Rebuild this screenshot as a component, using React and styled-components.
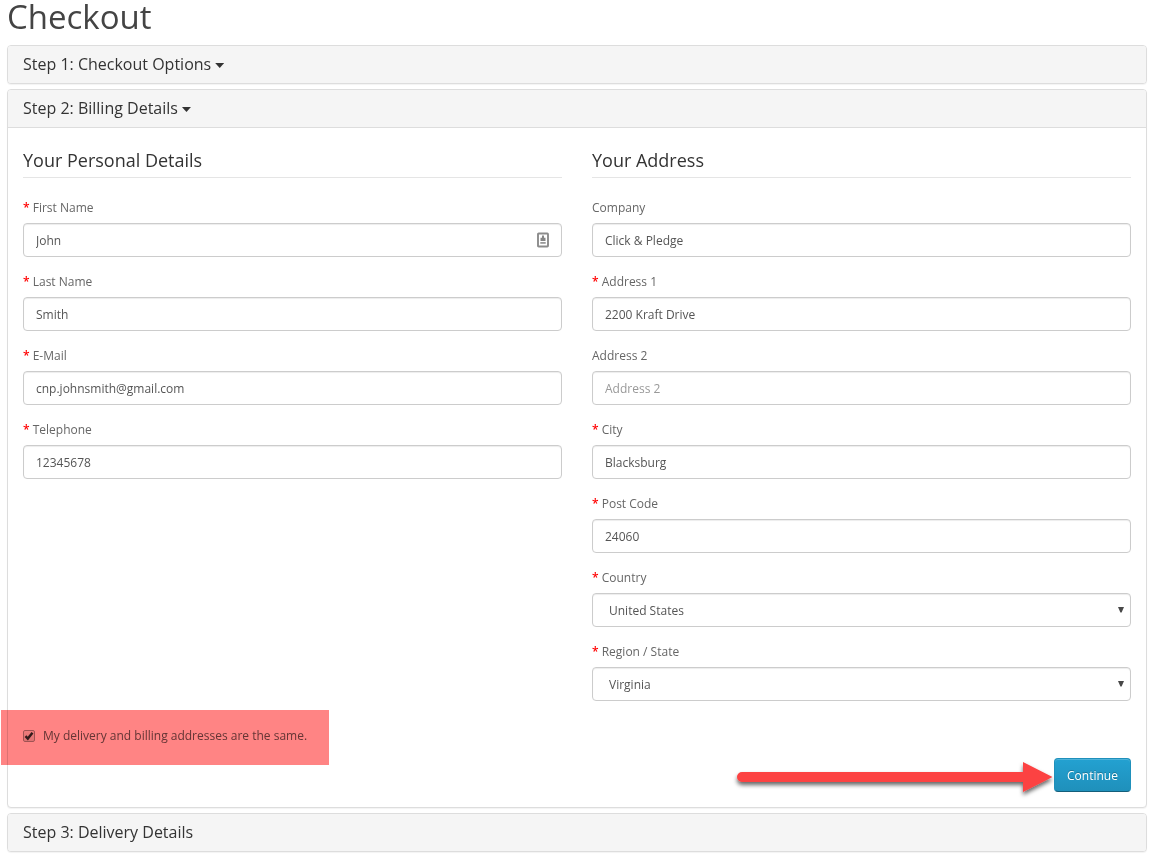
import React from "react";
import styled, { createGlobalStyle } from "styled-components";

const GlobalStyle = createGlobalStyle`
  *, *::before, *::after { box-sizing: border-box; }
  body {
    margin: 0;
    background: #fff;
    color: #666;
    font: 400 12px/20px "Open Sans", sans-serif;
  }
`;

const Page = styled.main`
  position: relative;
  width: 1152px;
  height: 857px;
  padding: 0 5px 0 7px;
`;

const PageTitle = styled.h1`
  margin: 0 0 12px;
  height: 33px;
  color: #444;
  font-size: 33px;
  font-weight: 400;
  line-height: 33px;
`;

const PanelGroup = styled.div`
  display: flex;
  flex-direction: column;
  gap: 5px;
`;

const Panel = styled.section`
  border: 1px solid #ddd;
  border-radius: 4px;
  background: #fff;
  box-shadow: 0 1px 1px rgba(0, 0, 0, 0.05);
`;

const PanelHeading = styled.header`
  display: flex;
  align-items: center;
  height: ${(p) => (p.$open ? 38 : 37)}px;
  padding: 0 15px 1px;
  background: #f5f5f5;
  border-radius: 3px;
  ${(p) => p.$open && "border-bottom: 1px solid #ddd; border-radius: 3px 3px 0 0;"}
`;

const PanelTitle = styled.h4`
  margin: 0;
  color: #333;
  font-size: 16px;
  font-weight: 400;
  line-height: 18px;
`;

const Caret = styled.span`
  width: 9px;
  height: 5px;
  margin: 3px 0 0 4px;
  background: #333;
  clip-path: polygon(0 0, 100% 0, 50% 100%);
`;

const PanelBody = styled.div`
  padding: 15px;
`;

const Columns = styled.div`
  display: grid;
  grid-template-columns: 1fr 1fr;
  gap: 30px;
`;

const Fieldset = styled.div`
  min-width: 0;
`;

const Legend = styled.h2`
  margin: 0 0 20px;
  height: 35px;
  color: #333;
  border-bottom: 1px solid #e5e5e5;
  font-size: 18px;
  font-weight: 400;
  line-height: 34px;
`;

const FormGroup = styled.div`
  height: 59px;
  margin-bottom: 15px;
`;

const Label = styled.label`
  display: block;
  margin-bottom: 5px;
  height: 20px;
`;

const Required = styled.span`
  color: #f00;
  font-weight: 600;
`;

const ControlFrame = styled.div`
  display: flex;
  align-items: center;
  height: 34px;
  padding: 0 ${(p) => (p.$select ? "6px 0 16px" : "12px")};
  border: 1px solid #ccc;
  border-radius: 4px;
  background: #fff;
  box-shadow: inset 0 1px 1px rgba(0, 0, 0, 0.075);
`;

const TextInput = styled.input`
  flex: 1;
  min-width: 0;
  height: 20px;
  margin: 2px 0 0;
  padding: 0;
  border: 0;
  outline: 0;
  background: transparent;
  color: #555;
  font: inherit;
  &::placeholder { color: #999; opacity: 1; }
`;

const SelectInput = styled.select`
  flex: 1;
  height: 22px;
  padding: 2px 0 0;
  border: 0;
  outline: 0;
  appearance: none;
  background: transparent;
  color: #555;
  font: inherit;
`;

const ActionArea = styled.div`
  display: flex;
  justify-content: space-between;
  height: 76px;
`;

const CheckLabel = styled.label`
  display: flex;
  align-items: center;
  gap: 8px;
  height: 20px;
  margin-top: 10px;
`;

const CheckBox = styled.span`
  display: flex;
  align-items: center;
  justify-content: center;
  width: 12px;
  height: 12px;
  border: 1px solid #a0a0a0;
  border-radius: 2px;
  background: linear-gradient(#eee, #dedede);
`;

const ContinueButton = styled.button`
  align-self: flex-end;
  width: 77px;
  height: 34px;
  padding: 2px 0 0;
  border: 1px solid;
  border-color: #1f90bb #1f90bb #145e7a;
  border-radius: 4px;
  background: linear-gradient(#23a1d1, #1f90bb);
  color: #fff;
  font: inherit;
  text-shadow: 0 -1px 0 rgba(0, 0, 0, 0.25);
  box-shadow: inset 0 1px 0 rgba(255, 255, 255, 0.2);
`;

const Highlight = styled.div`
  position: absolute;
  left: 1px;
  top: 710px;
  width: 328px;
  height: 55px;
  background: #ff8484;
  mix-blend-mode: multiply;
  pointer-events: none;
`;

const Arrow = styled.svg`
  position: absolute;
  left: 730px;
  top: 755px;
  pointer-events: none;
`;

const personal = [
  { label: "First Name", value: "John", required: true, contact: true },
  { label: "Last Name", value: "Smith", required: true },
  { label: "E-Mail", value: "cnp.johnsmith@gmail.com", required: true },
  { label: "Telephone", value: "12345678", required: true },
];

const address = [
  { label: "Company", value: "Click & Pledge" },
  { label: "Address 1", value: "2200 Kraft Drive", required: true },
  { label: "Address 2", value: "", placeholder: "Address 2" },
  { label: "City", value: "Blacksburg", required: true },
  { label: "Post Code", value: "24060", required: true },
  { label: "Country", value: "United States", required: true, select: true },
  { label: "Region / State", value: "Virginia", required: true, select: true },
];

function ContactIcon() {
  return (
    <svg width="12" height="16" viewBox="0 0 12 16" aria-hidden="true">
      <rect x="1" y="1.5" width="10" height="13" rx="0.7" fill="#fff" stroke="#8c8c8c" strokeWidth="1.9" />
      <path d="M5 3.5h2v2.2h1.5V9h-5V5.7H5Z" fill="#858585" />
      <path d="M3.3 10.9h5.4" stroke="#999" strokeWidth="1.8" />
    </svg>
  );
}

function Field({ label, value, required, placeholder, contact, select }) {
  const id = label.toLowerCase().replace(/[^a-z0-9]+/g, "-");
  return (
    <FormGroup>
      <Label htmlFor={id}>
        {required && <Required>* </Required>}
        {label}
      </Label>
      <ControlFrame $select={select}>
        {select ? (
          <>
            <SelectInput id={id} defaultValue={value}>
              <option>{value}</option>
            </SelectInput>
            <svg width="6" height="6" viewBox="0 0 6 6" aria-hidden="true">
              <path d="M0 0h6L3.6 5.6H2.4Z" fill="#484848" />
            </svg>
          </>
        ) : (
          <TextInput id={id} defaultValue={value} placeholder={placeholder} />
        )}
        {contact && <ContactIcon />}
      </ControlFrame>
    </FormGroup>
  );
}

export default function App() {
  return (
    <>
      <GlobalStyle />
      <Page>
        <PageTitle>Checkout</PageTitle>
        <PanelGroup>
          <Panel>
            <PanelHeading>
              <PanelTitle>Step 1: Checkout Options</PanelTitle>
              <Caret />
            </PanelHeading>
          </Panel>
          <Panel>
            <PanelHeading $open>
              <PanelTitle>Step 2: Billing Details</PanelTitle>
              <Caret />
            </PanelHeading>
            <PanelBody>
              <Columns>
                <Fieldset>
                  <Legend>Your Personal Details</Legend>
                  {personal.map((f) => <Field key={f.label} {...f} />)}
                </Fieldset>
                <Fieldset>
                  <Legend>Your Address</Legend>
                  {address.map((f) => <Field key={f.label} {...f} />)}
                </Fieldset>
              </Columns>
              <ActionArea>
                <CheckLabel>
                  <CheckBox role="checkbox" aria-checked="true">
                    <svg width="10" height="10" viewBox="0 0 10 10" aria-hidden="true">
                      <path d="M1.5 5.2 3.8 7.6 8.5 1.8" fill="none" stroke="#333" strokeWidth="2.4" />
                    </svg>
                  </CheckBox>
                  My delivery and billing addresses are the same.
                </CheckLabel>
                <ContinueButton>Continue</ContinueButton>
              </ActionArea>
            </PanelBody>
          </Panel>
          <Panel>
            <PanelHeading>
              <PanelTitle>Step 3: Delivery Details</PanelTitle>
            </PanelHeading>
          </Panel>
        </PanelGroup>
        <Highlight />
        <Arrow width="330" height="50" viewBox="0 0 330 50" aria-hidden="true">
          <defs>
            <filter id="arrow-shadow" x="-5%" y="-30%" width="110%" height="180%">
              <feDropShadow dx="0" dy="3" stdDeviation="2" floodColor="#000" floodOpacity="0.6" />
            </filter>
          </defs>
          <path
            d="M12 17H293V7L322.5 22 293 37V27H12A5 5 0 0 1 12 17Z"
            fill="#fc4242"
            filter="url(#arrow-shadow)"
          />
        </Arrow>
      </Page>
    </>
  );
}
